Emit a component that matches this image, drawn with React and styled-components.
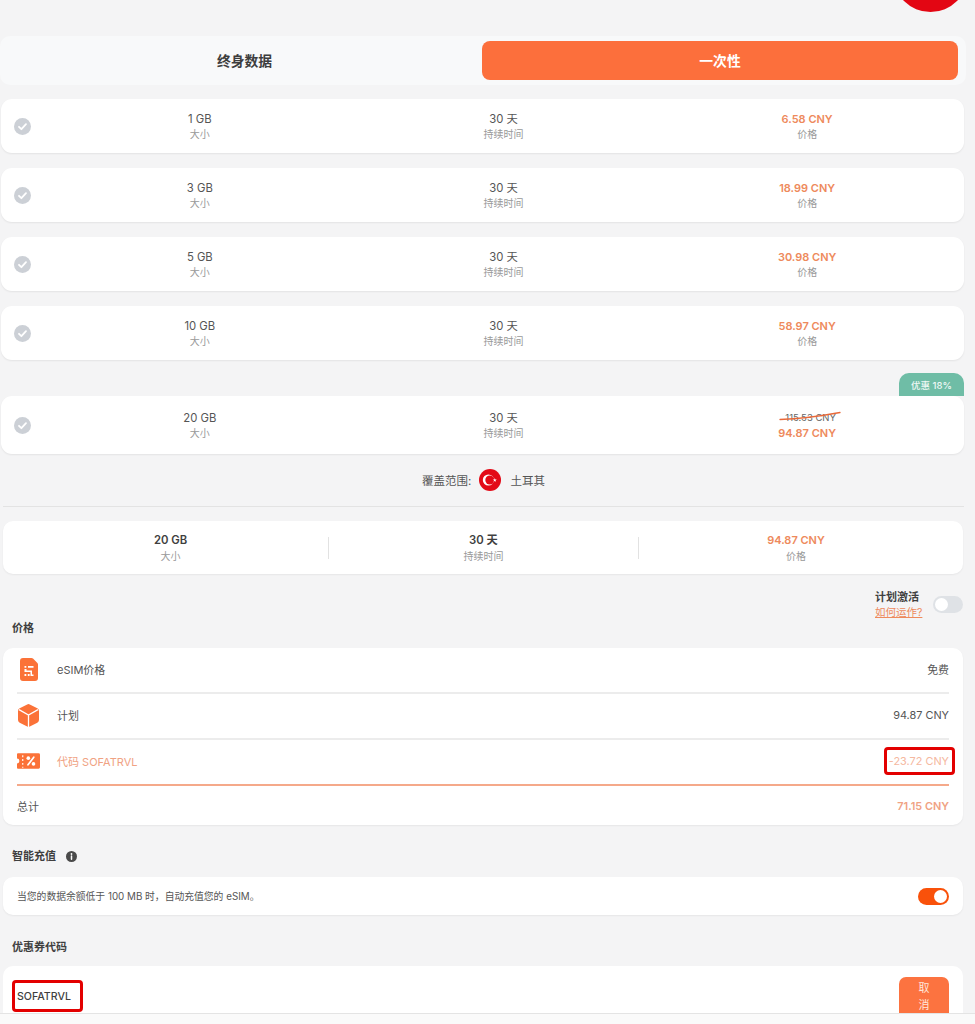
import React from 'react'
import styled, { createGlobalStyle } from 'styled-components'

const plans = [
  { size: '1 GB', price: '6.58 CNY' },
  { size: '3 GB', price: '18.99 CNY' },
  { size: '5 GB', price: '30.98 CNY' },
  { size: '10 GB', price: '58.97 CNY' },
]

const CheckIcon = () => (
  <svg width="17" height="17" viewBox="0 0 17 17">
    <circle cx="8.5" cy="8.5" r="8.5" fill="#ccd0d6" />
    <path d="M5 8.8l2.4 2.4L12 6.2" fill="none" stroke="#fff" strokeWidth="1.8" strokeLinecap="round" strokeLinejoin="round" />
  </svg>
)

const TurkeyFlag = () => (
  <svg width="22" height="22" viewBox="0 0 22 22">
    <circle cx="11" cy="11" r="11" fill="#e30a17" />
    <circle cx="9.4" cy="11" r="5.6" fill="#fff" />
    <circle cx="10.8" cy="11" r="4.5" fill="#e30a17" />
    <path d="M15.8 8.9l.5 1.5h1.6l-1.3.9.5 1.5-1.3-.9-1.3.9.5-1.5-1.3-.9h1.6z" fill="#fff" />
  </svg>
)

const SimIcon = () => (
  <svg width="18" height="23" viewBox="0 0 18 23">
    <path d="M3 0h8.500c.6 0 1.100.2 1.500.6l4.400 4.400c.4.4.6.9.6 1.500V20a3 3 0 0 1-3 3H3a3 3 0 0 1-3-3V3a3 3 0 0 1 3-3z" fill="#fb7238" />
    <path d="M4.500 8h1.800v1.800H4.500zM8 8h5.500v1.800H8zM4.500 11h2v1.500H12v4h1.500v1.500h-3v-4H4.500zM4.500 16h1.800v2H4.500zM7.800 16h1.800v2H7.800z" fill="#fff" />
  </svg>
)

const BoxIcon = () => (
  <svg width="21" height="23" viewBox="0 0 21 23">
    <path d="M9.200.4a3 3 0 0 1 2.600 0l7.500 3.800A3 3 0 0 1 21 6.900v9.200a3 3 0 0 1-1.700 2.700l-7.500 3.800a3 3 0 0 1-2.600 0l-7.500-3.800A3 3 0 0 1 0 16.100V6.900a3 3 0 0 1 1.700-2.700z" fill="#fb7238" />
    <path d="M1 5.600l9.500 5.400L20 5.600M10.500 11v12" fill="none" stroke="#fff" strokeWidth="1.300" />
  </svg>
)

const TicketIcon = () => (
  <svg width="24" height="18" viewBox="0 0 24 18">
    <path d="M1 1h21.500A1.500 1.500 0 0 1 24 2.500v13a1.500 1.500 0 0 1-1.500 1.500H1a1 1 0 0 1-1-1v-4.500a2.500 2.500 0 0 0 0-5V2a1 1 0 0 1 1-1z" fill="#fb7238" />
    <path d="M6 3v2M6 7v2M6 11v2M6 15v1" stroke="#fff" strokeWidth="1.200" />
    <path d="M11.500 13l6-8" stroke="#fff" strokeWidth="1.800" strokeLinecap="round" />
    <circle cx="11.800" cy="6" r="1.900" fill="#fff" />
    <circle cx="17.200" cy="12" r="1.900" fill="#fff" />
  </svg>
)

const InfoIcon = () => (
  <svg width="11" height="11" viewBox="0 0 11 11">
    <circle cx="5.500" cy="5.500" r="5.500" fill="#4a4a4a" />
    <path d="M5.500 5v3.200" stroke="#fff" strokeWidth="1.500" strokeLinecap="round" />
    <circle cx="5.500" cy="3" r="0.900" fill="#fff" />
  </svg>
)

const App = () => (
  <>
    <GlobalStyle />
    <Page>
      <TopBar>
        <Avatar />
      </TopBar>

      <Tabs>
        <Tab>终身数据</Tab>
        <Tab $active>一次性</Tab>
      </Tabs>

      <PlanList>
        {plans.map((plan) => (
          <PlanRow key={plan.size}>
            <CheckIcon />
            <Cell>
              <Value>{plan.size}</Value>
              <Label>大小</Label>
            </Cell>
            <Cell>
              <Value>30 天</Value>
              <Label>持续时间</Label>
            </Cell>
            <Cell>
              <Value $orange>{plan.price}</Value>
              <Label>价格</Label>
            </Cell>
          </PlanRow>
        ))}
      </PlanList>

      <DiscountWrap>
        <Badge>优惠 18%</Badge>
        <PlanRow $tall>
          <CheckIcon />
          <Cell>
            <Value>20 GB</Value>
            <Label>大小</Label>
          </Cell>
          <Cell>
            <Value>30 天</Value>
            <Label>持续时间</Label>
          </Cell>
          <Cell>
            <PriceStack>
              <OldPrice>
                115.53 CNY
                <StrikeLine width="62" height="10" viewBox="0 0 62 10">
                  <path d="M1 8.500C20 8 42 5 61 1.500" fill="none" stroke="#e8693a" strokeWidth="1.300" strokeLinecap="round" />
                </StrikeLine>
              </OldPrice>
              <Value $orange>94.87 CNY</Value>
            </PriceStack>
          </Cell>
        </PlanRow>
      </DiscountWrap>

      <Coverage>
        <span>覆盖范围:</span>
        <TurkeyFlag />
        <CountryName>土耳其</CountryName>
      </Coverage>

      <Divider />

      <Summary>
        <SummaryCell>
          <Value $bold>20 GB</Value>
          <Label>大小</Label>
        </SummaryCell>
        <SummaryCell $line>
          <Value $bold>30 天</Value>
          <Label>持续时间</Label>
        </SummaryCell>
        <SummaryCell $line>
          <Value $bold $orange>94.87 CNY</Value>
          <Label>价格</Label>
        </SummaryCell>
      </Summary>

      <ScheduleRow>
        <ScheduleText>
          <ScheduleTitle>计划激活</ScheduleTitle>
          <HowLink>如何运作?</HowLink>
        </ScheduleText>
        <Switch />
      </ScheduleRow>

      <PriceHeading>价格</PriceHeading>

      <Card>
        <PriceRow>
          <IconSlot><SimIcon /></IconSlot>
          <RowName>eSIM价格</RowName>
          <RowValue>免费</RowValue>
        </PriceRow>
        <PriceRow>
          <IconSlot><BoxIcon /></IconSlot>
          <RowName>计划</RowName>
          <RowValue>94.87 CNY</RowValue>
        </PriceRow>
        <PriceRow $accent>
          <IconSlot><TicketIcon /></IconSlot>
          <RowName $accent>代码 SOFATRVL</RowName>
          <RowValue $accent>
            -23.72 CNY
            <RedFrame />
          </RowValue>
        </PriceRow>
        <TotalRow>
          <RowName>总计</RowName>
          <RowValue $total>71.15 CNY</RowValue>
        </TotalRow>
      </Card>

      <SmartHeading>
        智能充值
        <InfoIcon />
      </SmartHeading>

      <SmartCard>
        <SmartText>当您的数据余额低于 100 MB 时，自动充值您的 eSIM。</SmartText>
        <Switch $on />
      </SmartCard>

      <CouponHeading>优惠券代码</CouponHeading>

      <CouponCard>
        <CouponCode>
          SOFATRVL
          <RedFrame $code />
        </CouponCode>
        <CancelButton>取消</CancelButton>
      </CouponCard>
    </Page>
  </>
)

const GlobalStyle = createGlobalStyle`
  body {
    margin: 0;
    background: #fafafa;
    font-family: 'Inter', 'Noto Sans CJK SC', sans-serif;
    color: #4d4d4d;
  }
`

const Page = styled.div`
  width: 975px;
  height: 1013px;
  overflow: hidden;
  background: #f4f4f5;
  border-bottom: 1px solid #e4e4e4;
`

const TopBar = styled.div`
  height: 12px;
  margin-bottom: 24px;
  padding-right: 7px;
  display: flex;
  justify-content: flex-end;
  align-items: flex-end;
  overflow: hidden;
`

const Avatar = styled.div`
  width: 75px;
  height: 75px;
  flex-shrink: 0;
  border-radius: 50%;
  background: #e30613;
`

const Tabs = styled.div`
  width: 966px;
  height: 49px;
  padding: 5px 8px 5px 0;
  box-sizing: border-box;
  display: grid;
  grid-template-columns: 482px 476px;
  background: #f8f9fa;
  border-radius: 10px;
`

const Tab = styled.div`
  display: flex;
  align-items: center;
  justify-content: center;
  padding: 0 0 2px ${(props) => (props.$active ? '0' : '7px')};
  border-radius: 8px;
  font-size: 13.8px;
  font-weight: 600;
  color: ${(props) => (props.$active ? '#fff' : '#3d3d3d')};
  background: ${(props) => (props.$active ? '#fc6f3c' : 'transparent')};
`

const PlanList = styled.div`
  margin-top: 14px;
  display: flex;
  flex-direction: column;
  gap: 15px;
`

const PlanRow = styled.div`
  width: 963px;
  height: ${(props) => (props.$tall ? '58px' : '54px')};
  margin-left: 1px;
  padding: 0 5px 0 13px;
  box-sizing: border-box;
  display: grid;
  grid-template-columns: 34px repeat(3, 1fr);
  align-items: center;
  background: #fff;
  border-radius: 11px;
  box-shadow: 0 1px 2px rgba(0, 0, 0, 0.07);
`

const Cell = styled.div`
  padding-top: 1px;
  display: flex;
  flex-direction: column;
  align-items: center;
  gap: 2px;
`

const Value = styled.div`
  font-size: ${(props) => (props.$orange ? '11px' : '11.3px')};
  line-height: 13px;
  font-weight: ${(props) => (props.$orange || props.$bold ? 600 : 400)};
  color: ${(props) => (props.$orange ? '#ee8a5c' : props.$bold ? '#3f3f3f' : '#555')};
`

const Label = styled.div`
  font-size: 10px;
  line-height: 13px;
  color: #999;
`

const DiscountWrap = styled.div`
  margin-top: 13px;
  display: flex;
  flex-direction: column;
  align-items: flex-start;
`

const Badge = styled.div`
  width: 65px;
  height: 23px;
  margin-left: 899px;
  display: flex;
  align-items: center;
  justify-content: center;
  background: #6fbda6;
  border-radius: 10px 10px 0 0;
  color: #eef8f5;
  font-size: 9.5px;
  font-weight: 500;
`

const PriceStack = styled.div`
  display: flex;
  flex-direction: column;
  align-items: flex-end;
  gap: 3px;
`

const OldPrice = styled.div`
  position: relative;
  font-size: 9.5px;
  line-height: 13px;
  color: #666;
`

const StrikeLine = styled.svg`
  position: absolute;
  right: -5px;
  top: 0;
`

const Coverage = styled.div`
  margin-top: 15px;
  height: 22px;
  padding-right: 8px;
  display: flex;
  align-items: center;
  justify-content: center;
  gap: 8px;
  font-size: 11.5px;
  color: #555;
`

const CountryName = styled.span`
  margin-left: 1px;
`

const Divider = styled.div`
  width: 961px;
  height: 1px;
  margin: 15px 0 14px 3px;
  background: #e3e3e3;
`

const Summary = styled.div`
  width: 960px;
  height: 53px;
  margin-left: 3px;
  padding: 0 10px;
  box-sizing: border-box;
  display: grid;
  grid-template-columns: 315px 310px 315px;
  align-items: center;
  background: #fff;
  border-radius: 10px;
  box-shadow: 0 1px 2px rgba(0, 0, 0, 0.06);
`

const SummaryCell = styled.div`
  height: 22px;
  padding-top: 2px;
  box-sizing: border-box;
  display: flex;
  flex-direction: column;
  align-items: center;
  justify-content: center;
  gap: 3px;
  border-left: ${(props) => (props.$line ? '1px solid #e2e2e2' : '0')};
`

const ScheduleRow = styled.div`
  margin-top: 16px;
  padding-right: 12px;
  display: flex;
  justify-content: flex-end;
  align-items: center;
  gap: 9px;
`

const ScheduleText = styled.div`
  width: 49px;
  display: flex;
  flex-direction: column;
  gap: 3px;
`

const ScheduleTitle = styled.div`
  font-size: 11px;
  line-height: 14px;
  font-weight: 600;
  color: #3f3f3f;
`

const HowLink = styled.a`
  font-size: 10.5px;
  line-height: 12px;
  white-space: nowrap;
  color: #ee8a5c;
  text-decoration: underline;
`

const Switch = styled.div`
  flex-shrink: 0;
  width: ${(props) => (props.$on ? '31px' : '30px')};
  height: 17px;
  padding: 2px;
  box-sizing: border-box;
  display: flex;
  justify-content: ${(props) => (props.$on ? 'flex-end' : 'flex-start')};
  border-radius: 9px;
  background: ${(props) => (props.$on ? '#f9510a' : '#dfe2e6')};

  &::after {
    content: '';
    width: 13px;
    height: 13px;
    border-radius: 50%;
    background: #fff;
  }
`

const Heading = styled.div`
  margin-left: 12px;
  font-size: 11px;
  line-height: 14px;
  font-weight: 600;
  color: #3f3f3f;
`

const PriceHeading = styled(Heading)`
  margin-top: 2px;
`

const Card = styled.div`
  width: 960px;
  margin: 13px 0 0 3px;
  padding: 0 14px;
  box-sizing: border-box;
  background: #fff;
  border-radius: 10px;
  box-shadow: 0 1px 2px rgba(0, 0, 0, 0.06);
`

const PriceRow = styled.div`
  height: 46px;
  padding-bottom: 2px;
  display: flex;
  align-items: center;
  box-sizing: border-box;
  border-bottom: 2px solid ${(props) => (props.$accent ? '#f5a98a' : '#ececec')};
`

const TotalRow = styled.div`
  height: 39px;
  display: flex;
  align-items: center;
`

const IconSlot = styled.div`
  width: 40px;
  padding-right: 17px;
  box-sizing: border-box;
  display: flex;
  justify-content: center;
`

const RowName = styled.div`
  font-size: 11px;
  color: ${(props) => (props.$accent ? '#f0a283' : '#555')};
`

const RowValue = styled.div`
  position: relative;
  margin-left: auto;
  font-size: 10.9px;
  font-weight: ${(props) => (props.$total ? 600 : 400)};
  color: ${(props) => (props.$accent ? '#f5b8a0' : props.$total ? '#f0a283' : '#555')};
`

const RedFrame = styled.span`
  position: absolute;
  left: -5px;
  right: ${(props) => (props.$code ? '-12px' : '-6px')};
  top: ${(props) => (props.$code ? '-10px' : '-7px')};
  bottom: ${(props) => (props.$code ? '-8px' : '-7px')};
  border: 3px solid #e30000;
  border-radius: 4px;
`

const SmartHeading = styled(Heading)`
  margin-top: 24px;
  display: flex;
  align-items: center;
  gap: 10px;
`

const SmartCard = styled.div`
  width: 960px;
  height: 38px;
  margin: 14px 0 0 3px;
  padding: 0 14px;
  box-sizing: border-box;
  display: flex;
  align-items: center;
  justify-content: space-between;
  background: #fff;
  border-radius: 10px;
  box-shadow: 0 1px 2px rgba(0, 0, 0, 0.06);
`

const SmartText = styled.div`
  font-size: 9.8px;
  color: #555;
`

const CouponHeading = styled(Heading)`
  margin-top: 25px;
`

const CouponCard = styled.div`
  width: 960px;
  height: 70px;
  margin: 12px 0 0 3px;
  padding: 11px 14px 0;
  box-sizing: border-box;
  display: flex;
  justify-content: space-between;
  align-items: flex-start;
  background: #fff;
  border-radius: 10px;
`

const CouponCode = styled.div`
  position: relative;
  margin-top: 13px;
  font-size: 10.6px;
  line-height: 14px;
  font-weight: 500;
  color: #3f3f3f;
`

const CancelButton = styled.div`
  width: 50px;
  height: 46px;
  padding: 3px 16px;
  box-sizing: border-box;
  border-radius: 7px;
  background: #fc7340;
  color: #ffe6da;
  font-size: 11px;
  line-height: 17px;
  text-align: center;
`

export default App
